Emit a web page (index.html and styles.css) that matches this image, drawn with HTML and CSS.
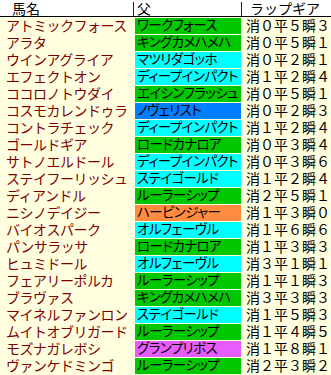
FILE: index.html
```html
<!DOCTYPE html>
<html lang="ja">
<head>
<meta charset="utf-8">
<link rel="stylesheet" href="styles.css">
</head>
<body>
<div class="sheet">
  <div class="head">
    <div class="hc h-name">馬名</div>
    <div class="hc h-sire">父</div>
    <div class="hc h-lap">ラップギア</div>
  </div>
  <div class="rows">
    <div class="name">アトミックフォース</div><div class="sire green">ワークフォース</div><div class="lap">消０平５瞬３</div>
    <div class="name">アラタ</div><div class="sire green">キングカメハメハ</div><div class="lap">消０平５瞬１</div>
    <div class="name">ウインアグライア</div><div class="sire cyan">マツリダゴッホ</div><div class="lap">消０平２瞬１</div>
    <div class="name">エフェクトオン</div><div class="sire cyan">ディープインパクト</div><div class="lap">消１平２瞬４</div>
    <div class="name">ココロノトウダイ</div><div class="sire green">エイシンフラッシュ</div><div class="lap">消０平５瞬１</div>
    <div class="name">コスモカレンドゥラ</div><div class="sire blue">ノヴェリスト</div><div class="lap">消０平２瞬３</div>
    <div class="name">コントラチェック</div><div class="sire cyan">ディープインパクト</div><div class="lap">消１平２瞬４</div>
    <div class="name">ゴールドギア</div><div class="sire green">ロードカナロア</div><div class="lap">消０平３瞬４</div>
    <div class="name">サトノエルドール</div><div class="sire cyan">ディープインパクト</div><div class="lap">消０平３瞬６</div>
    <div class="name">ステイフーリッシュ</div><div class="sire cyan">ステイゴールド</div><div class="lap">消１平２瞬４</div>
    <div class="name">ディアンドル</div><div class="sire green">ルーラーシップ</div><div class="lap">消２平５瞬１</div>
    <div class="name">ニシノデイジー</div><div class="sire orange">ハービンジャー</div><div class="lap">消１平３瞬０</div>
    <div class="name">バイオスパーク</div><div class="sire cyan">オルフェーヴル</div><div class="lap">消１平６瞬６</div>
    <div class="name">パンサラッサ</div><div class="sire green">ロードカナロア</div><div class="lap">消１平３瞬３</div>
    <div class="name">ヒュミドール</div><div class="sire cyan">オルフェーヴル</div><div class="lap">消３平１瞬１</div>
    <div class="name">フェアリーポルカ</div><div class="sire green">ルーラーシップ</div><div class="lap">消１平１瞬３</div>
    <div class="name">ブラヴァス</div><div class="sire green">キングカメハメハ</div><div class="lap">消３平３瞬３</div>
    <div class="name">マイネルファンロン</div><div class="sire cyan">ステイゴールド</div><div class="lap">消１平５瞬３</div>
    <div class="name">ムイトオブリガード</div><div class="sire green">ルーラーシップ</div><div class="lap">消１平４瞬５</div>
    <div class="name">モズナガレボシ</div><div class="sire magenta">グランプリボス</div><div class="lap">消１平８瞬１</div>
    <div class="name">ヴァンケドミンゴ</div><div class="sire green">ルーラーシップ</div><div class="lap">消２平３瞬２</div>
  </div>
</div>
</body>
</html>
```
FILE: styles.css
```css
html, body {
  margin: 0;
  padding: 0;
  background: #ffffe0;
}
.sheet {
  width: 331px;
  height: 375px;
  overflow: hidden;
  font-family: "Liberation Sans", "Noto Sans CJK JP", sans-serif;
  font-size: 14px;
  line-height: 16px;
}
.head {
  display: grid;
  grid-template-columns: 134px 108px 1fr;
  height: 16px;
  background: #ffffff;
  border-bottom: 1px solid #000000;
}
.hc {
  height: 14px;
  margin-top: 2px;
  line-height: 14px;
  color: #000000;
  font-size: 14px;
}
.h-name {
  padding-left: 12px;
  border-right: 1px solid #222222;
}
.h-sire {
  padding-left: 3px;
  border-right: 1px solid #222222;
}
.h-lap {
  padding-left: 8px;
}
.rows {
  display: grid;
  grid-template-columns: 133px 106px 1fr;
  grid-auto-rows: 16px;
  column-gap: 2px;
  row-gap: 1px;
  padding-top: 1px;
}
.name {
  color: #800000;
  padding-left: 6px;
  white-space: nowrap;
  letter-spacing: -0.5px;
}
.sire {
  color: #000000;
  font-size: 13.5px;
  padding-left: 2px;
  white-space: nowrap;
  letter-spacing: -0.6px;
  font-feature-settings: "palt";
  overflow: hidden;
}
.lap {
  color: #000000;
  padding-left: 3px;
  white-space: nowrap;
}
.green { background: #00c800; }
.cyan { background: #00ffff; }
.blue { background: #0080ff; }
.orange { background: #ff8c40; }
.magenta { background: #e65cff; }
```
